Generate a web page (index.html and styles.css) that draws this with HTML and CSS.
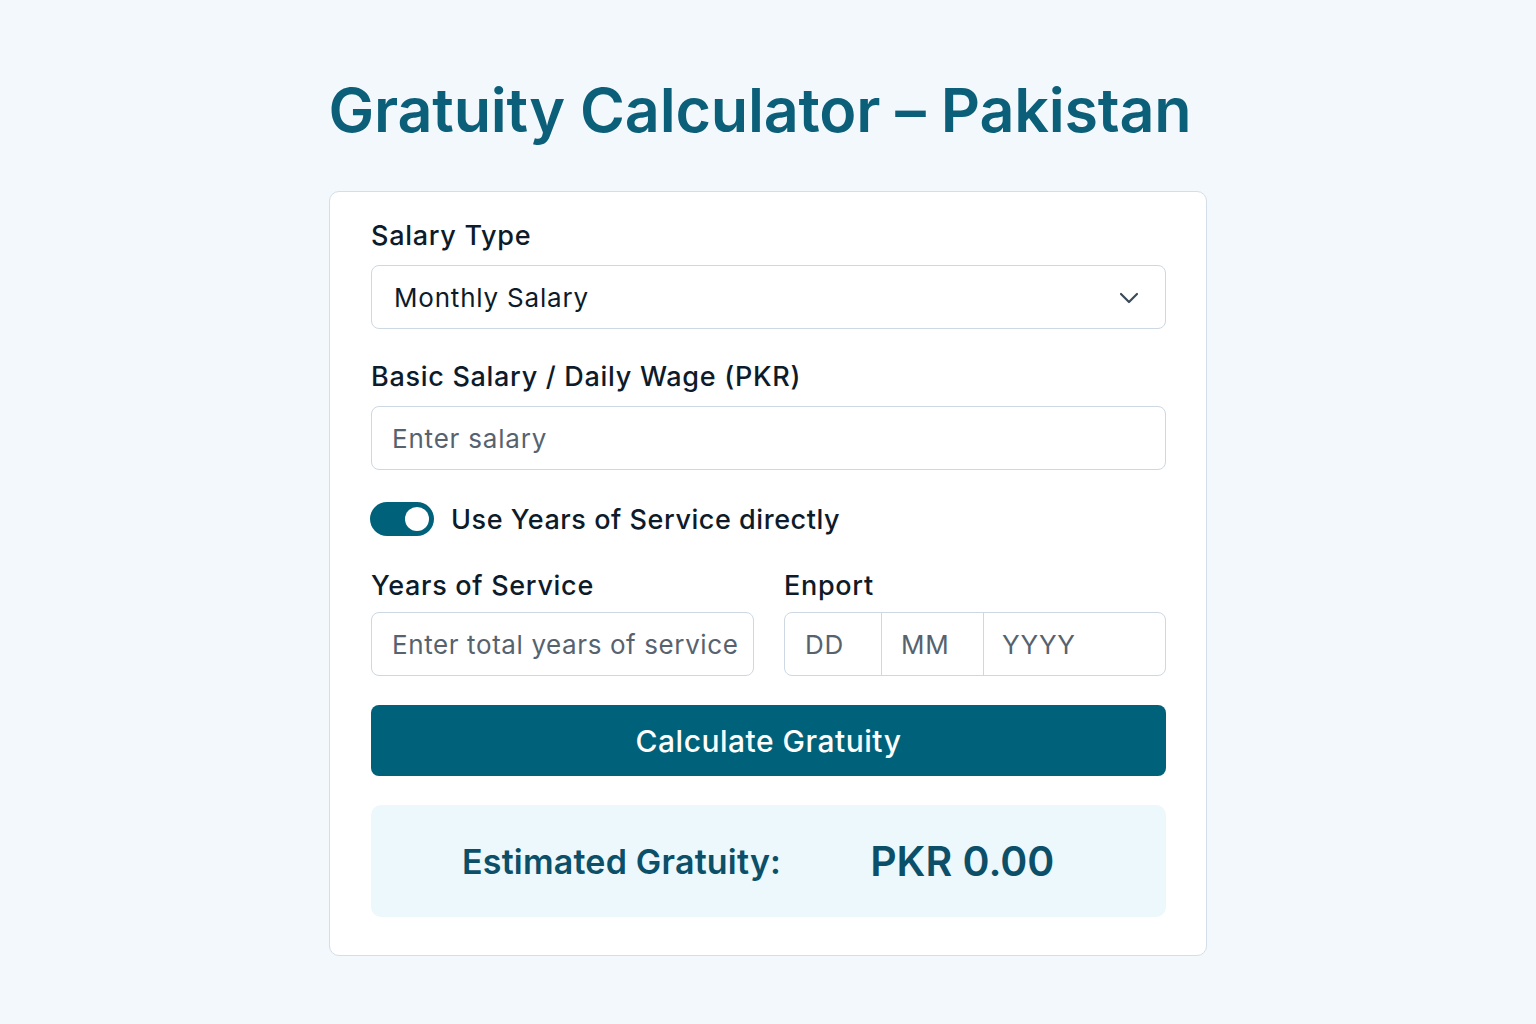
FILE: index.html
```html
<!DOCTYPE html>
<html lang="en">
<head>
<meta charset="utf-8">
<title>Gratuity Calculator – Pakistan</title>
<link rel="stylesheet" href="styles.css">
</head>
<body>
<main class="page">
  <h1 class="title">Gratuity Calculator – Pakistan</h1>
  <section class="card">
    <div class="field">
      <label class="label">Salary Type</label>
      <div class="control select">
        <span class="value">Monthly Salary</span>
        <svg class="chev" width="20" height="12" viewBox="0 0 20 12"><path d="M2 2 L10 10 L18 2" fill="none" stroke="#3a4a58" stroke-width="2.2" stroke-linecap="round" stroke-linejoin="round"/></svg>
      </div>
    </div>
    <div class="field">
      <label class="label">Basic Salary / Daily Wage (PKR)</label>
      <div class="control"><span class="placeholder ph-salary">Enter salary</span></div>
    </div>
    <div class="toggle-row">
      <span class="toggle"><span class="knob"></span></span>
      <span class="toggle-label">Use Years of Service directly</span>
    </div>
    <div class="two-col">
      <div class="field">
        <label class="label">Years of Service</label>
        <div class="control control-years"><span class="placeholder ph-years">Enter total years of service</span></div>
      </div>
      <div class="field">
        <label class="label">Enport</label>
        <div class="control date">
          <span class="seg seg-d">DD</span>
          <span class="seg seg-m">MM</span>
          <span class="seg seg-y">YYYY</span>
        </div>
      </div>
    </div>
    <button class="btn">Calculate Gratuity</button>
    <div class="result">
      <span class="result-label">Estimated Gratuity:</span>
      <span class="result-value">PKR 0.00</span>
    </div>
  </section>
</main>
</body>
</html>
```
FILE: styles.css
```css
* { box-sizing: border-box; }
html, body { margin: 0; padding: 0; }
body {
  background: #f3f8fc;
  font-family: Inter, "Noto Sans", "Liberation Sans", sans-serif;
  color: #0f1e2e;
  width: 1536px;
  height: 1024px;
}
.page {
  display: flex;
  flex-direction: column;
  align-items: center;
  padding-top: 74px;
}
.title {
  margin: 0 0 45px 0;
  font-size: 61px;
  font-weight: 600;
  line-height: 72px;
  color: #0b5f78;
  letter-spacing: -0.2px;
  padding-right: 16px;
  white-space: nowrap;
}
.card {
  width: 878px;
  height: 765px;
  background: #ffffff;
  border: 1.5px solid #d3dee8;
  border-radius: 10px;
  padding: 24px 40px 0 41px;
  display: flex;
  flex-direction: column;
}
.field { display: flex; flex-direction: column; }
.label {
  font-size: 27px;
  font-weight: 500;
  line-height: 40px;
  letter-spacing: 0.7px;
  margin-bottom: 9px;
  color: #0d1b2a;
  white-space: nowrap;
}
.control {
  height: 64px;
  border: 1.5px solid #cdd8e2;
  border-radius: 8px;
  display: flex;
  align-items: center;
  padding: 0 20px;
  font-size: 26px;
  letter-spacing: 0.8px;
  background: #fff;
  white-space: nowrap;
  overflow: hidden;
}
.select { justify-content: space-between; padding-left: 22px; padding-right: 26px; }
.select .value { color: #0d1b2a; }
.chev { margin-top: 2px; flex: none; }
.field + .field { margin-top: 28px; }
.placeholder { color: #56636f; }
.control-years { padding-right: 8px; }
.ph-years { letter-spacing: 0.6px; }
.toggle-row {
  display: flex;
  align-items: center;
  gap: 17px;
  margin-top: 32px;
  margin-left: -1px;
}
.toggle {
  width: 64px;
  height: 34px;
  border-radius: 17px;
  background: #00627a;
  position: relative;
  display: inline-block;
}
.knob {
  position: absolute;
  top: 5px;
  right: 5px;
  width: 24px;
  height: 24px;
  border-radius: 50%;
  background: #ffffff;
}
.toggle-label { font-size: 27px; font-weight: 500; color: #0d1b2a; letter-spacing: 0.55px; }
.two-col {
  display: grid;
  grid-template-columns: 383px 382px;
  column-gap: 30px;
  margin-top: 30px;
}
.two-col .label { margin-bottom: 6px; }
.two-col .field + .field { margin-top: 0; }
.date { padding: 0; }
.seg {
  height: 100%;
  display: flex;
  align-items: center;
  color: #56636f;
  padding-left: 20px;
}
.seg-d { width: 97px; border-right: 1.5px solid #cdd8e2; }
.seg-m { width: 102px; border-right: 1.5px solid #cdd8e2; padding-left: 19px; }
.seg-y { flex: 1; padding-left: 18px; }
.btn {
  margin-top: 29px;
  height: 71px;
  width: 100%;
  border: none;
  border-radius: 8px;
  background: #00627a;
  color: #ffffff;
  font-family: inherit;
  font-size: 30px;
  font-weight: 500;
  letter-spacing: 0.5px;
}
.result {
  margin-top: 29px;
  height: 112px;
  background: #ecf8fc;
  border-radius: 10px;
  display: flex;
  align-items: center;
  padding-left: 91px;
  gap: 89px;
}
.result-label { font-size: 34px; font-weight: 600; color: #0b5068; letter-spacing: 0.2px; }
.result-value { font-size: 41px; font-weight: 600; color: #0b5068; }
```
